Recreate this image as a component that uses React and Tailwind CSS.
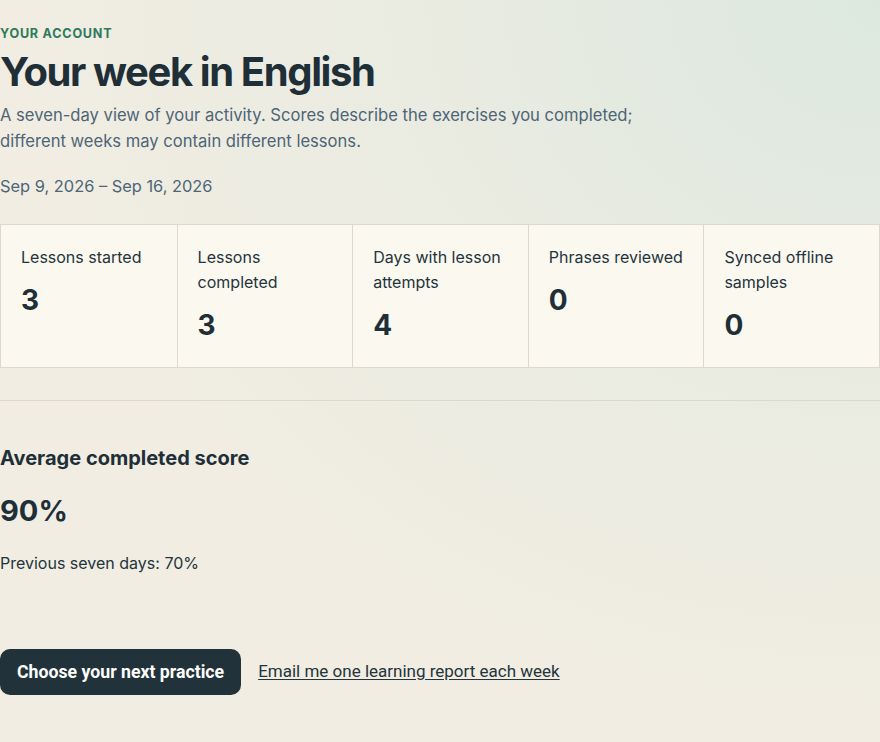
import React from "react";

const stats = [
  { label: "Lessons started", value: "3" },
  { label: "Lessons completed", value: "3" },
  { label: "Days with lesson attempts", value: "4" },
  { label: "Phrases reviewed", value: "0" },
  { label: "Synced offline samples", value: "0" },
];

const App = () => {
  return (
    <div className="min-h-[742px] w-full bg-[#f1ede2] bg-[radial-gradient(ellipse_at_top_right,#dce8df_0%,#e9ebe1_35%,#f1ede2_70%)] font-['Inter',sans-serif] text-[#1f2f38]">
      <header className="pt-[27px]">
        <p className="text-[12.6px] font-bold uppercase tracking-[0.06em] text-[#2e7a5c] leading-[14px]">
          Your account
        </p>
        <h1 className="mt-[7px] text-[40px] font-bold leading-[48px] tracking-[-0.035em] text-[#1f2f38]">
          Your week in English
        </h1>
        <p className="mt-[6px] max-w-[660px] text-[16.6px] leading-[26px] text-[#4d6577]">
          A seven-day view of your activity. Scores describe the exercises you completed;
          different weeks may contain different lessons.
        </p>
        <p className="mt-[19px] text-[16.4px] leading-[26px] text-[#4d6577]">
          Sep 9, 2026 – Sep 16, 2026
        </p>
      </header>

      <section className="mt-[25px] grid grid-cols-5 border border-[#ddd8cb] bg-[#fbf8f0]">
        {stats.map((s, i) => (
          <div
            key={s.label}
            className={
              "flex h-[142px] flex-col px-[20px] pt-[20px] " +
              (i > 0 ? "border-l border-[#ddd8cb]" : "")
            }
          >
            <span className="text-[16px] leading-[25px] text-[#24343c]">{s.label}</span>
            <span className="mt-[13px] text-[28px] font-bold leading-[34px] text-[#1f2f38]">
              {s.value}
            </span>
          </div>
        ))}
      </section>

      <hr className="mt-[32px] border-0 border-t border-[#ddd8cb]" />

      <section className="pt-[43px]">
        <h2 className="text-[20px] font-bold leading-[28px] text-[#1f2f38]">
          Average completed score
        </h2>
        <p className="mt-[21px] text-[29px] font-bold leading-[36px] text-[#1f2f38]">90%</p>
        <p className="mt-[22px] text-[16px] leading-[24px] text-[#24343c]">
          Previous seven days: 70%
        </p>
      </section>

      <div className="mt-[74px] flex items-center gap-[17px] pb-[48px]">
        <button
          type="button"
          className="h-[46px] rounded-[10px] bg-[#22323b] px-[17px] font-['Roboto',sans-serif] text-[17.7px] font-bold text-white"
        >
          Choose your next practice
        </button>
        <a
          href="#"
          className="font-['Roboto',sans-serif] text-[17px] text-[#24343c] underline underline-offset-2"
        >
          Email me one learning report each week
        </a>
      </div>
    </div>
  );
};

export default App;
